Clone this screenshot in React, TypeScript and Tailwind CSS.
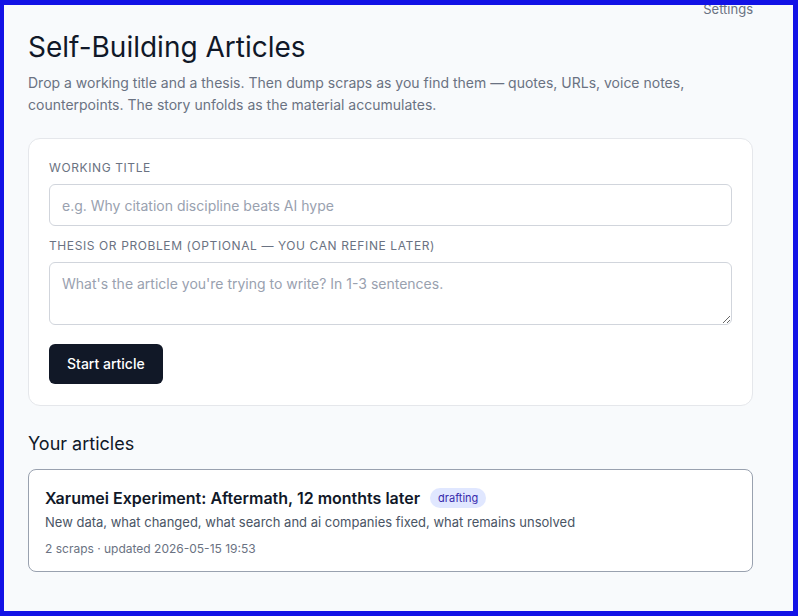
import React from "react";

export default function App() {
  return (
    <div
      className="h-[616px] w-[798px] overflow-hidden border-[#1212e6] border-t-[5px] border-l-[4px] border-r-[5px] border-b-[5px] bg-[#f8fafc]"
      style={{ fontFamily: "Inter, 'Noto Sans', sans-serif" }}
    >
      <div className="w-[773px] pl-6 pr-0">
        <div className="w-[725px]">
          <div className="-mt-[6px] flex h-5 items-center justify-end text-[13px] leading-5 text-gray-500">
            Settings
          </div>
          <h1 className="mt-[10px] text-[28px] leading-9 font-normal text-gray-900">Self-Building Articles</h1>
          <p className="mt-[7px] text-sm leading-[22px] text-gray-500">
            Drop a working title and a thesis. Then dump scraps as you find them — quotes, URLs, voice notes,
            counterpoints. The story unfolds as the material accumulates.
          </p>

          <div className="mt-[22px] rounded-xl border border-gray-200 bg-white px-5 pt-[21px] pb-[21px]">
            <label className="block text-xs leading-4 tracking-wider text-gray-500 uppercase">Working title</label>
            <input
              className="mt-2 block h-[42px] w-full rounded-md border border-gray-300 px-3 text-sm text-gray-900 placeholder:text-gray-400 outline-none"
              placeholder="e.g. Why citation discipline beats AI hype"
            />
            <label className="mt-3 block text-xs leading-4 tracking-wider text-gray-500 uppercase">
              Thesis or problem (optional — you can refine later)
            </label>
            <textarea
              className="mt-[8px] block h-[63px] w-full rounded-md border border-gray-300 px-3 py-[11px] text-sm leading-5 text-gray-900 placeholder:text-gray-400 outline-none"
              placeholder="What's the article you're trying to write? In 1-3 sentences."
            />
            <button className="mt-[19px] h-10 rounded-md bg-[#111827] px-[18px] text-sm font-medium text-white">
              Start article
            </button>
          </div>

          <h2 className="mt-[24px] text-lg leading-7 text-gray-900">Your articles</h2>

          <div className="mt-[11px] rounded-lg border border-gray-400 bg-white px-4 pt-4 pb-[14px]">
            <div className="flex items-center gap-[10px]">
              <span className="text-base leading-6 font-semibold text-gray-900">
                Xarumei Experiment: Aftermath, 12 monthts later
              </span>
              <span className="rounded-full bg-indigo-100 px-2 py-[2px] text-[11px] leading-4 text-indigo-800">drafting</span>
            </div>
            <p className="mt-[2px] text-[13px] leading-5 text-gray-600">
              New data, what changed, what search and ai companies fixed, what remains unsolved
            </p>
            <p className="mt-[9px] text-xs leading-4 text-gray-500">2 scraps · updated 2026-05-15 19:53</p>
          </div>
        </div>
      </div>
    </div>
  );
}
